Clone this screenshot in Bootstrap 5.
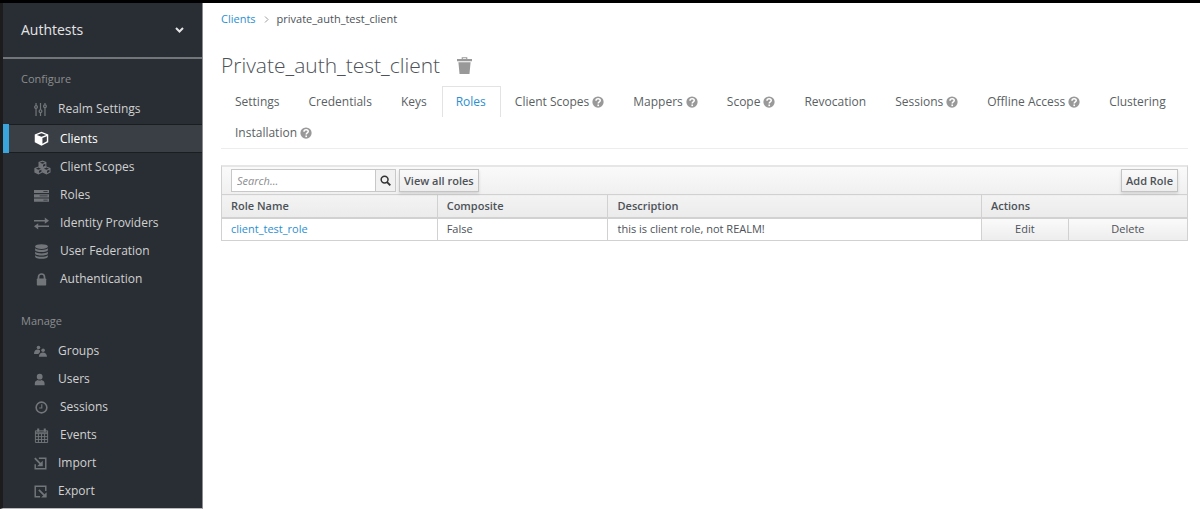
<!DOCTYPE html>
<html lang="en">
<head>
<meta charset="utf-8">
<meta name="viewport" content="width=device-width, initial-scale=1">
<title>Private_auth_test_client - Roles</title>
<link href="https://cdn.jsdelivr.net/npm/bootstrap@5.3.0/dist/css/bootstrap.min.css" rel="stylesheet">
<style>
  body { font-family: "Open Sans", sans-serif; font-size: 11px; line-height: 16px; color: #4d5258; background: #fff; border-top: 3px solid #000; }
  a { color: #2b8fd0; text-decoration: none; }
  .shell { min-height: calc(100vh - 3px); }

  .side { width: 203px; background: #292e34; border-left: 3px solid #1c1c1c; border-right: 1px solid #8b8d8f; border-bottom: 1px solid #b8babc; color: #d1d1d1; }
  .realm { width: 100%; height: 56px; padding: 0 18px; border: 0; border-bottom: 2px solid #72767b; background: none; color: #e4e4e4; font-size: 14px; }
  .side h2 { margin: 0; padding: 0 18px; font-size: 11px; line-height: 16px; color: #8b8d8f; font-weight: 400; }
  .side .side-configure { padding-top: 12px; }
  .side .side-manage { padding-top: 20px; }
  .side a { height: 28px; padding-left: 31px; gap: 11px; color: #d1d1d1; font-size: 12px; }
  .side a svg { width: 15px; height: 15px; color: #72767b; overflow: visible; }
  .side a svg.slim { width: 13px; height: 13px; }
  .side a.active { height: 29px; padding-left: 25px; background: #393f44; border-left: 6px solid #39a5dc; box-shadow: inset 0 1px #1b1e21, inset 0 -1px #1b1e21; color: #fff; margin-top: 1px; }
  .side a.active svg { color: #fff; }

  .page { padding: 8px 12px 24px 18px; min-width: 0; }
  .page h1 { font-size: 21px; line-height: 28px; font-weight: 300; color: #4d5258; }
  .title-row { margin-top: 24px; margin-bottom: 7px; gap: 17px; }
  .trash { padding: 0; border: 0; background: none; color: #999; line-height: 1; }

  .tabs { border-bottom: 1px solid #ededed; }
  .tabs .nav-link { height: 31px; padding: 0 14px 1px 13px; border: 1px solid transparent; border-bottom: 0; border-radius: 0; font-size: 12px; color: #5a5f64; gap: 3px; }
  .tabs .nav-link.active { color: #2b8fd0; border-color: #e3e3e3; }
  .tabs svg { width: 12px; height: 12px; color: #999; }

  .panel { border: 1px solid #d1d1d1; border-top: 2px solid #e6e6e6; }
  .bar { height: 27px; padding: 0 9px; gap: 3px; background: linear-gradient(#fafafa, #f0f0f0); }
  .find { width: 165px; height: 23px; border: 1px solid #c8c8c8; background: #fff; }
  .find input { min-width: 0; border: 0; padding: 0 5px; font-size: 11px; color: #4d5258; outline: 0; }
  .find input::placeholder { color: #8b8d8f; font-style: italic; }
  .find button { width: 21px; border: 0; border-left: 1px solid #c8c8c8; background: #f1f1f1; color: #333; padding: 0; }
  .tool { height: 23px; padding: 0 4px; border: 1px solid #c4c4c4; background: linear-gradient(#fafafa, #ededed); box-shadow: 0 2px 3px rgba(3,3,3,.12); font-size: 11px; font-weight: 600; line-height: 16px; color: #4d5258; }
  .roles { table-layout: fixed; width: 100%; border-collapse: collapse; }
  .roles th { height: 23px; padding: 0 9px; border-top: 1px solid #d1d1d1; border-bottom: 2px solid #d1d1d1; background: linear-gradient(#f3f3f3, #ebebeb); font-weight: 600; color: #4d5258; }
  .roles td { height: 22px; padding: 0 9px; }
  .roles th + th, .roles td + td { border-left: 1px solid #d1d1d1; }
  .roles td.act { padding: 0; background: linear-gradient(#fafafa, #ededed); }
  .act button { width: 100%; border: 0; padding: 0; background: none; color: #4d5258; }
  .c-name { width: 22.3%; } .c-comp { width: 17.7%; } .c-desc { width: 38.7%; } .c-edit { width: 9%; }
</style>
</head>
<body>
<svg class="d-none" aria-hidden="true">
  <symbol id="i-sliders" viewBox="0 0 16 16"><g fill="none" stroke="currentColor" stroke-width="1.5"><path d="M2.500 0v3.300M2.500 6.700V16M8 0v8.300M8 11.700V16M13.500 0v2.300M13.500 5.700V16"/><circle cx="2.500" cy="5" r="1.700"/><circle cx="8" cy="10" r="1.700"/><circle cx="13.500" cy="4" r="1.700"/></g></symbol>
  <symbol id="i-cube" viewBox="0 0 16 16"><path fill="currentColor" fill-rule="evenodd" d="M8 .8 15.200 3.600V12L8 15.800.8 12V3.600zM8 2.400 3 4.300l5 1.900 5-1.900zM9 13.500l4.700-2.500V5.700L9 7.500z"/></symbol>
  <symbol id="i-cubes" viewBox="0 0 16 16" overflow="visible"><path fill="currentColor" fill-rule="evenodd" d="M9 .5l4.200 1.700v4.600l4.400 1.800v4.700L13.300 15.500 9 13.400l-4.300 2.100L.4 13.300V8.600l4.400-1.800V2.200zM9 1.800 6.300 2.900 9 4l2.700-1.100zM9.600 7.200l2.500-1.100V4L9.600 5.100zM4.700 8 2 9.200l2.700 1.100L7.400 9.200zM5.300 13.900 7.900 12.600v-2.200l-2.600 1.100zM13.300 8l-2.700 1.200 2.700 1.100L16 9.200zM13.900 13.900l2.600-1.300v-2.200l-2.600 1.100z"/></symbol>
  <symbol id="i-server" viewBox="0 0 16 14"><path fill="currentColor" fill-rule="evenodd" d="M0 1h16v3.400H0zM10 2.300h4.500v.8H10zM0 5.600h16V9H0zM6 6.900h8.500v.8H6zM0 10.200h16v3.400H0zM10 11.500h4.500v.8H10z"/></symbol>
  <symbol id="i-swap" viewBox="0 0 16 16"><path fill="currentColor" d="M0 4.200h11.500V1.700L16 5l-4.500 3.300V5.800H0zM16 10.200H4.500V7.700L0 11l4.500 3.300v-2.500H16z"/></symbol>
  <symbol id="i-db" viewBox="0 0 16 16"><g fill="currentColor"><ellipse cx="8" cy="2.700" rx="6.800" ry="2.500"/><path d="M1.200 4.500C3.500 6.900 12.500 6.900 14.800 4.500v1.800C14.800 9.300 1.200 9.300 1.200 6.300zM1.200 8.200c2.300 2.400 11.300 2.400 13.600 0V10c0 3-13.600 3-13.600 0zM1.200 11.900c2.300 2.400 11.300 2.400 13.600 0v1.300c0 3.500-13.600 3.500-13.600 0z"/></g></symbol>
  <symbol id="i-lock" viewBox="0 0 16 16"><rect x="3" y="7" width="10" height="7.500" rx=".8" fill="currentColor"/><path fill="none" stroke="currentColor" stroke-width="1.800" d="M4.800 7.500V5.300a3.200 3.200 0 0 1 6.400 0v2.200"/></symbol>
  <symbol id="i-users" viewBox="0 0 16 16"><g fill="currentColor"><circle cx="5.500" cy="3" r="2.200"/><circle cx="11.200" cy="6.500" r="2.200"/><path d="M6 14.500c0-7 10-7 10 0zM0 11c0-5 4-6.500 7.300-4.500L7.500 8.500 5.300 11z"/></g></symbol>
  <symbol id="i-user" viewBox="0 0 16 16"><g fill="currentColor"><circle cx="7" cy="4.500" r="3.600"/><path d="M1 15V12.500C1 10 3 9 4.800 8.500c1.200 1 3.200 1 4.400 0C11 9 13 10 13 12.500V15z"/></g></symbol>
  <symbol id="i-clock" viewBox="0 0 16 16"><g fill="none" stroke="currentColor"><circle cx="8" cy="8" r="5.700" stroke-width="1.700"/><path d="M8.300 4.500v4H5.500" stroke-width="1.200"/></g></symbol>
  <symbol id="i-cal" viewBox="0 0 16 16"><g fill="none" stroke="currentColor"><path d="M1.500 3h13v12.500h-13zM1.500 6h13M1.500 9.200h13M1.500 12.300h13M4.700 6v9.500M8 6v9.500M11.300 6v9.500"/><path d="M4.500.5v3.500M11.500.5v3.500" stroke-width="2.200"/><path d="M1.500 4.500h13"/></g></symbol>
  <symbol id="i-import" viewBox="0 0 16 16"><g fill="none" stroke="currentColor" stroke-width="1.800"><path d="M6 1.500h8.500v13h-13V9"/><path d="M1 1.500l7.500 7.500" stroke-width="2.200"/></g><path fill="currentColor" d="M10.800 4.500v7H3.800z"/></symbol>
  <symbol id="i-export" viewBox="0 0 16 16"><g fill="none" stroke="currentColor" stroke-width="1.800"><path d="M7.500 14.500h-6v-13h13v6"/><path d="M6 6l6.500 6.500" stroke-width="2.200"/></g><path fill="currentColor" d="M15.500 8.800v6.700H8.800z"/></symbol>
  <symbol id="i-help" viewBox="0 0 16 16"><circle cx="8" cy="8" r="7.500" fill="currentColor"/><path d="M5.300 6.200C5.300 2.700 11 2.900 11 6c0 1.900-2.700 1.900-2.700 4" fill="none" stroke="#fff" stroke-width="2"/><path fill="#fff" d="M7.200 11.300h2.200v2.200H7.200z"/></symbol>
  <symbol id="i-search" viewBox="0 0 16 16"><g fill="none" stroke="currentColor"><circle cx="6.700" cy="6.700" r="5" stroke-width="2.200"/><path d="M10.300 10.300l4.700 4.700" stroke-width="2.800"/></g></symbol>
  <symbol id="i-trash" viewBox="0 0 16 18"><path fill="currentColor" fill-rule="evenodd" d="M0 2h5V.3h6V2h5v2.500H0zM6.200 2h3.600v-.7H6.200zM1.500 5.500h13L13.300 18H2.700z"/></symbol>
</svg>

<div class="shell d-flex">
  <nav class="side flex-shrink-0" aria-label="Realm">
    <button class="realm d-flex align-items-center justify-content-between" type="button">Authtests
      <svg width="9" height="6" viewBox="0 0 9 6"><path d="M1 1l3.500 3.500L8 1" fill="none" stroke="currentColor" stroke-width="2"/></svg>
    </button>
    <h2 class="side-configure mb-2">Configure</h2>
    <div class="d-flex flex-column">
      <a href="#" class="d-flex align-items-center"><svg class="slim"><use href="#i-sliders"/></svg>Realm Settings</a>
      <a href="#" class="d-flex align-items-center active"><svg><use href="#i-cube"/></svg>Clients</a>
      <a href="#" class="d-flex align-items-center"><svg><use href="#i-cubes"/></svg>Client Scopes</a>
      <a href="#" class="d-flex align-items-center"><svg><use href="#i-server"/></svg>Roles</a>
      <a href="#" class="d-flex align-items-center"><svg><use href="#i-swap"/></svg>Identity Providers</a>
      <a href="#" class="d-flex align-items-center"><svg><use href="#i-db"/></svg>User Federation</a>
      <a href="#" class="d-flex align-items-center"><svg><use href="#i-lock"/></svg>Authentication</a>
    </div>
    <h2 class="side-manage mb-2">Manage</h2>
    <div class="d-flex flex-column">
      <a href="#" class="d-flex align-items-center"><svg class="slim"><use href="#i-users"/></svg>Groups</a>
      <a href="#" class="d-flex align-items-center"><svg class="slim"><use href="#i-user"/></svg>Users</a>
      <a href="#" class="d-flex align-items-center"><svg><use href="#i-clock"/></svg>Sessions</a>
      <a href="#" class="d-flex align-items-center"><svg><use href="#i-cal"/></svg>Events</a>
      <a href="#" class="d-flex align-items-center"><svg class="slim"><use href="#i-import"/></svg>Import</a>
      <a href="#" class="d-flex align-items-center"><svg class="slim"><use href="#i-export"/></svg>Export</a>
    </div>
  </nav>

  <main class="page flex-grow-1">
    <nav class="d-flex align-items-center gap-2" aria-label="Breadcrumb">
      <a href="#">Clients</a>
      <svg width="5" height="7" viewBox="0 0 5 7"><path d="M1 .5l3 3-3 3" fill="none" stroke="#9c9c9c"/></svg>
      <span>private_auth_test_client</span>
    </nav>
    <div class="title-row d-flex align-items-center">
      <h1 class="mb-0">Private_auth_test_client</h1>
      <button class="trash" type="button" aria-label="Delete client"><svg width="15" height="17"><use href="#i-trash"/></svg></button>
    </div>
    <ul class="tabs nav mb-3">
      <li><a href="#" class="nav-link d-flex align-items-center">Settings</a></li>
      <li><a href="#" class="nav-link d-flex align-items-center">Credentials</a></li>
      <li><a href="#" class="nav-link d-flex align-items-center">Keys</a></li>
      <li><a href="#" class="nav-link d-flex align-items-center active">Roles</a></li>
      <li><a href="#" class="nav-link d-flex align-items-center">Client Scopes <svg><use href="#i-help"/></svg></a></li>
      <li><a href="#" class="nav-link d-flex align-items-center">Mappers <svg><use href="#i-help"/></svg></a></li>
      <li><a href="#" class="nav-link d-flex align-items-center">Scope <svg><use href="#i-help"/></svg></a></li>
      <li><a href="#" class="nav-link d-flex align-items-center">Revocation</a></li>
      <li><a href="#" class="nav-link d-flex align-items-center">Sessions <svg><use href="#i-help"/></svg></a></li>
      <li><a href="#" class="nav-link d-flex align-items-center">Offline Access <svg><use href="#i-help"/></svg></a></li>
      <li><a href="#" class="nav-link d-flex align-items-center">Clustering</a></li>
      <li><a href="#" class="nav-link d-flex align-items-center">Installation <svg><use href="#i-help"/></svg></a></li>
    </ul>

    <div class="panel">
      <div class="bar d-flex align-items-center">
        <form class="find d-flex">
          <input class="flex-grow-1" type="text" placeholder="Search..." aria-label="Search roles">
          <button class="d-flex align-items-center justify-content-center" type="button" aria-label="Search"><svg width="11" height="11"><use href="#i-search"/></svg></button>
        </form>
        <button class="tool" type="button">View all roles</button>
        <button class="tool ms-auto" type="button">Add Role</button>
      </div>
      <table class="roles">
        <colgroup><col class="c-name"><col class="c-comp"><col class="c-desc"><col class="c-edit"><col></colgroup>
        <thead><tr><th>Role Name</th><th>Composite</th><th>Description</th><th colspan="2">Actions</th></tr></thead>
        <tbody><tr>
          <td><a href="#">client_test_role</a></td><td>False</td><td>this is client role, not REALM!</td>
          <td class="act"><button type="button">Edit</button></td><td class="act"><button type="button">Delete</button></td>
        </tr></tbody>
      </table>
    </div>
  </main>
</div>
<script src="https://cdn.jsdelivr.net/npm/bootstrap@5.3.0/dist/js/bootstrap.bundle.min.js"></script>
</body>
</html>
